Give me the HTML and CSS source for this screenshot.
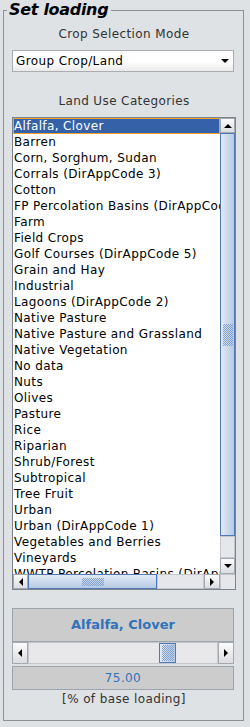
FILE: index.html
```html
<!DOCTYPE html>
<html lang="en">
  <head>
    <meta charset="UTF-8" />
    <meta name="viewport" content="width=device-width, initial-scale=1.0" />
    <title>Set loading</title>
    <link rel="stylesheet" href="styles.css">
  </head>
  <body>
    <fieldset class="panel">
      <legend class="panel-title">Set loading</legend>
      <div class="caption">Crop Selection Mode</div>
      <div class="combo">
        <span class="combo-text">Group Crop/Land</span>
        <span class="tri tri-down"></span>
      </div>
      <div class="caption caption-list">Land Use Categories</div>
      <div class="listbox">
        <div class="list-view">
          <div class="item selected">Alfalfa, Clover</div>
          <div class="item">Barren</div>
          <div class="item">Corn, Sorghum, Sudan</div>
          <div class="item">Corrals (DirAppCode 3)</div>
          <div class="item">Cotton</div>
          <div class="item">FP Percolation Basins (DirAppCode 4)</div>
          <div class="item">Farm</div>
          <div class="item">Field Crops</div>
          <div class="item">Golf Courses (DirAppCode 5)</div>
          <div class="item">Grain and Hay</div>
          <div class="item">Industrial</div>
          <div class="item">Lagoons (DirAppCode 2)</div>
          <div class="item">Native Pasture</div>
          <div class="item">Native Pasture and Grassland</div>
          <div class="item">Native Vegetation</div>
          <div class="item">No data</div>
          <div class="item">Nuts</div>
          <div class="item">Olives</div>
          <div class="item">Pasture</div>
          <div class="item">Rice</div>
          <div class="item">Riparian</div>
          <div class="item">Shrub/Forest</div>
          <div class="item">Subtropical</div>
          <div class="item">Tree Fruit</div>
          <div class="item">Urban</div>
          <div class="item">Urban (DirAppCode 1)</div>
          <div class="item">Vegetables and Berries</div>
          <div class="item">Vineyards</div>
          <div class="item">WWTP Percolation Basins (DirAppCode 6)</div>
        </div>
        <div class="vscroll">
          <div class="sb-btn"><span class="tri tri-up"></span></div>
          <div class="thumb thumb-v"><span class="grip grip-v"></span></div>
          <div class="track"></div>
          <div class="sb-btn sb-btn-end"><span class="tri tri-down"></span></div>
        </div>
        <div class="hscroll">
          <div class="sb-btn"><span class="tri tri-left"></span></div>
          <div class="thumb thumb-h"><span class="grip grip-h"></span></div>
          <div class="track"></div>
          <div class="sb-btn sb-btn-end"><span class="tri tri-right"></span></div>
        </div>
        <div class="corner"></div>
      </div>
      <div class="readout readout-name">Alfalfa, Clover</div>
      <div class="slider">
        <div class="sb-btn"><span class="tri tri-left"></span></div>
        <div class="slider-track">
          <div class="thumb thumb-slider" style="margin-left: 130px"><span class="grip grip-slider"></span></div>
        </div>
        <div class="sb-btn"><span class="tri tri-right"></span></div>
      </div>
      <div class="readout readout-value">75.00</div>
      <div class="caption units">[% of base loading]</div>
    </fieldset>
  </body>
</html>
```

FILE: styles.css
```css
body {
  margin: 0;
  background: #dee2e5;
  font-family: "DejaVu Sans", sans-serif;
  font-size: 12px;
  letter-spacing: 0.38px;
  color: #333;
}
.panel {
  margin: 0 6px 0 3px;
  padding: 0 7px 13px 8px;
  border: 1px solid #8d9196;
  min-width: 0;
}
.panel-title {
  margin-left: -5px;
  padding: 0 3px 0 2px;
  font-size: 16px;
  line-height: 20px;
  font-weight: bold;
  font-style: italic;
  letter-spacing: -0.3px;
  color: #000;
}
.caption {
  margin-top: 7px;
  line-height: 15px;
  text-align: center;
}
.caption-list {
  margin-top: 22px;
}
.combo {
  margin-top: 8px;
  margin-right: 2px;
  height: 20px;
  border: 1px solid #a9adb2;
  background: linear-gradient(#ffffff 55%, #e9e9e9);
  display: flex;
  align-items: center;
  justify-content: space-between;
  padding: 0 4px 0 3px;
  color: #000;
}
.tri {
  width: 0;
  height: 0;
  border-style: solid;
  border-color: transparent;
}
.tri-down {
  border-width: 4px 4px 0 4px;
  border-top-color: #000;
}
.tri-up {
  border-width: 0 4px 4px 4px;
  border-bottom-color: #000;
}
.tri-left {
  border-width: 4px 4px 4px 0;
  border-right-color: #000;
}
.tri-right {
  border-width: 4px 0 4px 4px;
  border-left-color: #000;
}
.listbox {
  margin-top: 8px;
  border: 1px solid #7c838c;
  display: grid;
  grid-template-columns: 207px 15px;
  grid-template-rows: 456px 15px;
  background: #fff;
}
.list-view {
  overflow: hidden;
  background: #fff;
}
.item {
  height: 16px;
  line-height: 16px;
  padding-left: 1px;
  white-space: nowrap;
  color: #000;
}
.item.selected {
  background: #3461a8;
  color: #fff;
  box-shadow: inset 0 0 0 1px #f0a22c;
}
.vscroll {
  display: flex;
  flex-direction: column;
  background: #e6e7ea;
}
.hscroll {
  display: flex;
  background: #e6e7ea;
}
.sb-btn {
  flex: 0 0 15px;
  box-sizing: border-box;
  border: 1px solid #a4a9b0;
  background: linear-gradient(#fbfbfb, #dcdde0);
  display: flex;
  align-items: center;
  justify-content: center;
}
.sb-btn-end {
  flex-basis: 16px;
}
.track {
  flex: 1;
  border: 1px solid #c3c6cb;
}
.thumb {
  box-sizing: border-box;
  border: 1px solid #5277b5;
  display: flex;
  align-items: center;
  justify-content: center;
}
.thumb-v {
  flex: 0 0 403px;
  background: linear-gradient(90deg, #e2eaf5, #b6cae4);
}
.thumb-h {
  flex: 0 0 129px;
  background: linear-gradient(#e2eaf5, #b6cae4);
}
.grip {
  background: repeating-conic-gradient(#7f9fd3 0 25%, transparent 0 50%) 0 0 / 2px 2px;
}
.grip-v {
  width: 10px;
  height: 22px;
}
.grip-h {
  width: 22px;
  height: 8px;
}
.corner {
  background: #e6e7ea;
  border-top: 1px solid #c3c6cb;
  border-left: 1px solid #c3c6cb;
}
.readout {
  margin-right: 2px;
  background: #cccccc;
  border: 1px solid #9ca4ae;
  text-align: center;
  color: #2f73bb;
}
.readout-name {
  margin-top: 18px;
  height: 32px;
  line-height: 32px;
  font-size: 13px;
  font-weight: bold;
  letter-spacing: 0;
}
.slider {
  margin-right: 2px;
  height: 22px;
  display: flex;
}
.slider .sb-btn {
  flex-basis: 16px;
}
.slider-track {
  flex: 1;
  background: #e8e8ea;
  border: 1px solid #c3c6cb;
  display: flex;
}
.thumb-slider {
  width: 17px;
  background: linear-gradient(90deg, #e2eaf5, #b6cae4);
}
.grip-slider {
  width: 12px;
  height: 16px;
}
.readout-value {
  margin-top: 2px;
  height: 22px;
  line-height: 22px;
}
.units {
  margin-top: 2px;
}
```
